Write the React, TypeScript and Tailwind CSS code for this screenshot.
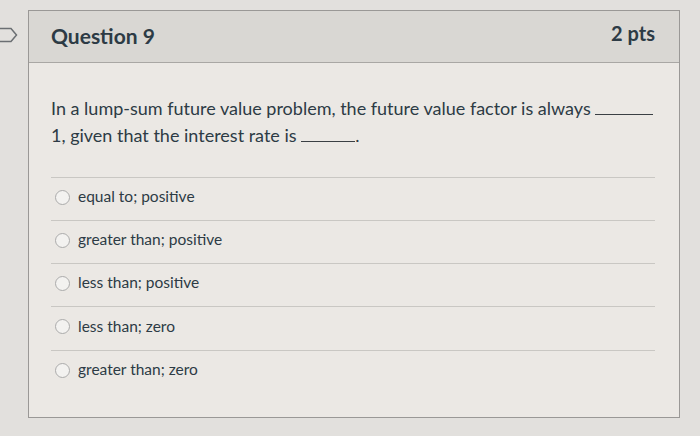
import React from "react";

const options = [
  "equal to; positive",
  "greater than; positive",
  "less than; positive",
  "less than; zero",
  "greater than; zero",
];

const Blank = ({ w }: { w: string }) => (
  <span className={`inline-block border-b border-[#3a3f44] align-baseline ${w}`} />
);

export default function App() {
  return (
    <div
      className="relative w-[700px] h-[436px] bg-[#e2e0dd] overflow-hidden pt-[10px] pl-[28px]"
      style={{ fontFamily: "Lato, 'Open Sans', sans-serif" }}
    >
      {/* left nav tab */}
      <svg className="absolute left-0 top-[27px]" width="18" height="16" viewBox="0 0 18 16">
        <path d="M-2 1.5 H11 L16.5 8 L11 14.5 H-2" fill="none" stroke="#6b6f73" strokeWidth="1.5" />
      </svg>

      <div className="w-[652px] h-[408px] border border-[#9a9896] bg-[#ebe8e4] flex flex-col">
        <div className="h-[52px] bg-[#d9d7d3] border-b border-[#a9a7a4] flex items-center justify-between pl-[22px] pr-[24px]">
          <span className="text-[21px] font-bold text-[#2d3b45] leading-none -mt-[2px]">Question 9</span>
          <span className="text-[20px] font-bold text-[#2d3b45] leading-none -mt-[8px]">2 pts</span>
        </div>

        <div className="pl-[22px] pr-[24px] pt-[32px]">
          <p className="text-[18px] leading-[27px] text-[#2d3b45] whitespace-nowrap">
            In a lump-sum future value problem, the future value factor is always <Blank w="w-[58px]" />
            <br />
            1, given that the interest rate is <Blank w="w-[54px]" />.
          </p>

          <div className="mt-[28px]">
            {options.map((opt, i) => (
              <div
                key={opt}
                className={`flex items-center gap-[8px] pl-[4px] pb-[4px] border-t border-[#c9c7c3] ${i === 3 ? "h-[44px]" : "h-[43px]"}`}
              >
                <span className="w-[15px] h-[15px] rounded-full border border-[#ababab] bg-[#f3f2f0] shrink-0" />
                <span className="text-[15.5px] text-[#2d3b45]">{opt}</span>
              </div>
            ))}
          </div>
        </div>
      </div>
    </div>
  );
}
